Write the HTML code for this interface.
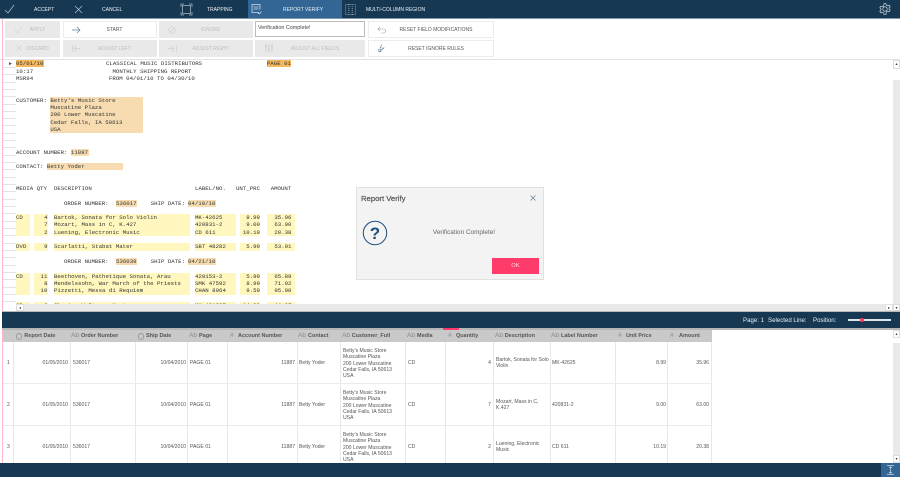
<!DOCTYPE html>
<html><head><meta charset="utf-8">
<style>
html,body{margin:0;padding:0;background:#fff}
#p{position:relative;width:900px;height:477px;overflow:hidden;background:#fff;font-family:"Liberation Sans",sans-serif;color:#444}
.a{position:absolute}
.t{position:absolute;white-space:nowrap;line-height:10px;height:10px}
.tb{font-size:5px;color:#eef3f7;top:5px}
.b{position:absolute;box-sizing:border-box;font-size:5px;text-align:center;white-space:nowrap;height:17px}
.d{background:#e9e9e9;color:#bdbdbd;line-height:19px}
.w{background:#fff;border:1px solid #ececec;color:#555;line-height:17px}
.m{position:absolute;left:16px;width:300px;font:5.72px/7px "Liberation Mono",monospace;color:#333;white-space:pre;height:7px}
.m span{position:absolute;top:0}
.q{right:268.500px}.ds{left:38px}.l{left:179px}.u{right:56px}.am{right:24.500px}
.h{position:absolute}
.or{background:#f4b85e}.pe{background:#f6dcb0}.ye{background:#fff7bd}
.gl{position:absolute;left:3px;width:13px;height:1px;background:#e4e4e4}
.hd{position:absolute;top:330px;height:12px;font-size:5.5px;font-weight:bold;line-height:13px;color:#555;white-space:nowrap}
.ic{position:absolute;top:330px;height:12px;font-size:6.500px;line-height:11px;color:#888;white-space:nowrap}
.ck{position:absolute;top:333px;width:4.800px;height:4.800px;border:.5px solid #999;border-radius:50%}
.c{position:absolute;font-size:5.1px;line-height:6.3px;color:#555;white-space:nowrap}
.r{text-align:right}
.v{position:absolute;top:342px;height:121px;width:1px;background:#e8e8e8}
svg{position:absolute;overflow:visible}
</style></head><body>
<div id="p">
<!-- top bar -->
<div class="a" style="left:0;top:0;width:900px;height:18px;background:#163853"></div>
<div class="a" style="left:248px;top:0;width:94px;height:18px;background:#336595"></div>
<div class="a" style="left:0;top:18px;width:900px;height:1px;background:#7f98aa"></div>
<svg style="left:4px;top:4px" width="11" height="10" fill="none" stroke="#b9c7d2" stroke-width=".7"><path d="M1 6l3 3 6-8"/></svg>
<svg style="left:74px;top:5px" width="9" height="9" fill="none" stroke="#b9c7d2" stroke-width=".7"><path d="M1 1l7 7M8 1l-7 7"/></svg>
<svg style="left:181px;top:4px" width="11" height="11" fill="none" stroke="#9fb1bf" stroke-width=".8"><rect x="1.500" y="1.500" width="8" height="8"/><path d="M0 3V0h3M8 0h3v3M11 8v3H8M3 11H0V8"/></svg>
<svg style="left:251px;top:4px" width="11" height="11" fill="none" stroke="#cddbe6" stroke-width=".8"><path d="M8 8.500H1V.5h8v5M2.500 3h5M2.500 5h5M7 9l1.300 1L10.500 7.500"/></svg>
<svg style="left:345px;top:4px" width="11" height="11" fill="none" stroke="#9fb1bf" stroke-width=".8" stroke-dasharray="1 1"><rect x=".5" y=".5" width="10" height="10"/><path d="M3.800 0v11M7.200 0v11"/></svg>
<svg style="left:879px;top:3px" width="12" height="12" viewBox="0 0 12 12" fill="none" stroke="#b9c7d2" stroke-width=".8"><circle cx="6" cy="6" r="2.200"/><path d="M5 .7h2l.4 1.500 1.300.6 1.400-.7 1.100 1.700-1.100 1 0 1.400 1.100 1-1.100 1.700-1.400-.7-1.300.7L7 11.300H5l-.4-1.500-1.300-.6-1.400.7L.8 8.200l1.100-1V5.800l-1.100-1 1.100-1.700 1.400.7 1.300-.6z"/></svg>
<div class="t tb" style="left:34px">ACCEPT</div>
<div class="t tb" style="left:102px">CANCEL</div>
<div class="t tb" style="left:207px">TRAPPING</div>
<div class="t tb" style="left:283px">REPORT VERIFY</div>
<div class="t tb" style="left:366px">MULTI-COLUMN REGION</div>
<!-- toolbar -->
<div class="b d" style="left:5px;top:21px;width:55px;padding-left:10px">APPLY</div>
<div class="b d" style="left:5px;top:40px;width:55px;padding-left:10px;line-height:18px">DISCARD</div>
<div class="b w" style="left:63px;top:21px;width:94px;padding-left:9px">START</div>
<div class="b d" style="left:63px;top:40px;width:94px;padding-left:9px;line-height:18px">ADJUST LEFT</div>
<div class="b d" style="left:159px;top:21px;width:94px;padding-left:9px">IGNORE</div>
<div class="b d" style="left:159px;top:40px;width:94px;padding-left:9px;line-height:18px">ADJUST RIGHT</div>
<div class="a" style="left:255px;top:21px;width:110px;height:16px;box-sizing:border-box;border:1px solid #bbb;background:#fff;font-size:5.4px;line-height:12px;padding-left:2px;color:#444;white-space:nowrap">Verification Complete!</div>
<div class="b d" style="left:255px;top:40px;width:110px;padding-left:10px;line-height:18px">ADJUST ALL FIELDS</div>
<div class="b w" style="left:368px;top:21px;width:126px;padding-left:10px">RESET FIELD MODIFICATIONS</div>
<div class="b w" style="left:368px;top:40px;width:126px;padding-left:10px;line-height:16px">RESET IGNORE RULES</div>
<svg style="left:14px;top:26px" width="9" height="8" fill="none" stroke="#d8d8d8" stroke-width=".7"><path d="M1 4l2.500 3L8 1"/></svg>
<svg style="left:15px;top:44px" width="8" height="8" fill="none" stroke="#d8d8d8" stroke-width=".7"><path d="M1 1l6 6M7 1l-6 6"/></svg>
<svg style="left:72px;top:26px" width="9" height="8" fill="none" stroke="#667f94" stroke-width=".7"><path d="M0 4h8M5 1l3 3-3 3"/></svg>
<svg style="left:72px;top:45px" width="9" height="7" fill="none" stroke="#cfcfcf" stroke-width=".7"><path d="M.5 0v7M8 3.500H2M4.500 1L2 3.500 4.500 6"/></svg>
<svg style="left:168px;top:26px" width="8" height="8" fill="none" stroke="#cfcfcf" stroke-width=".7"><circle cx="4" cy="4" r="3.300"/><path d="M1.800 6.200l4.400-4.400"/></svg>
<svg style="left:168px;top:45px" width="9" height="7" fill="none" stroke="#cfcfcf" stroke-width=".7"><path d="M8.500 0v7M0 3.500h6M3.500 1L6 3.500 3.500 6"/></svg>
<svg style="left:265px;top:44px" width="8" height="8" fill="none" stroke="#c8c8c8" stroke-width=".8"><path d="M1 0v8M4 0v8M7 0v8M0 2.500h2M3 5.500h2M6 2.500h2"/></svg>
<svg style="left:377px;top:26px" width="9" height="8" fill="none" stroke="#94a3af" stroke-width=".6"><path d="M1 3h5.500a2 2 0 010 4H4M3 1L1 3l2 2"/></svg>
<svg style="left:378px;top:44px" width="7" height="9" fill="none" stroke="#667f94" stroke-width=".6"><path d="M4 .5L2 4h4L1 8"/><circle cx="1.800" cy="6.500" r="1.300"/></svg>
<div class="a" style="left:0;top:59px;width:900px;height:1px;background:#e2e2e2"></div>
<!-- left pink line -->
<div class="a" style="left:2px;top:19px;width:1px;height:444px;background:#ffb6c6"></div>
<!-- gutter -->
<div class="gl" style="top:67px"></div><div class="gl" style="top:74px"></div><div class="gl" style="top:82px"></div><div class="gl" style="top:89px"></div><div class="gl" style="top:96px"></div><div class="gl" style="top:104px"></div><div class="gl" style="top:111px"></div><div class="gl" style="top:118px"></div><div class="gl" style="top:125px"></div><div class="gl" style="top:133px"></div><div class="gl" style="top:140px"></div><div class="gl" style="top:147px"></div><div class="gl" style="top:155px"></div><div class="gl" style="top:162px"></div><div class="gl" style="top:169px"></div><div class="gl" style="top:177px"></div><div class="gl" style="top:184px"></div><div class="gl" style="top:191px"></div><div class="gl" style="top:199px"></div><div class="gl" style="top:206px"></div><div class="gl" style="top:213px"></div><div class="gl" style="top:221px"></div><div class="gl" style="top:228px"></div><div class="gl" style="top:235px"></div><div class="gl" style="top:243px"></div><div class="gl" style="top:250px"></div><div class="gl" style="top:257px"></div><div class="gl" style="top:265px"></div><div class="gl" style="top:272px"></div><div class="gl" style="top:279px"></div><div class="gl" style="top:287px"></div><div class="gl" style="top:294px"></div><div class="gl" style="top:301px"></div>
<div class="t" style="left:8px;top:59px;font-size:5px;color:#555">►</div>
<!-- highlights -->
<div class="h or" style="left:16px;top:60px;width:28px;height:7px"></div>
<div class="h or" style="left:267px;top:60px;width:24px;height:7px"></div>
<div class="h pe" style="left:50px;top:97px;width:93px;height:36px"></div>
<div class="h pe" style="left:71px;top:149px;width:18px;height:7px"></div>
<div class="h pe" style="left:47px;top:163px;width:76px;height:7px"></div>
<div class="h pe" style="left:116px;top:200px;width:21px;height:7px"></div>
<div class="h pe" style="left:188px;top:200px;width:28px;height:7px"></div>
<div class="h ye" style="left:16px;top:214px;width:14px;height:22px"></div>
<div class="h ye" style="left:34px;top:214px;width:14px;height:22px"></div>
<div class="h ye" style="left:54px;top:214px;width:136px;height:22px"></div>
<div class="h ye" style="left:195px;top:214px;width:41px;height:22px"></div>
<div class="h ye" style="left:240px;top:214px;width:20px;height:22px"></div>
<div class="h ye" style="left:267px;top:214px;width:28px;height:22px"></div>
<div class="h ye" style="left:16px;top:243px;width:14px;height:8px"></div>
<div class="h ye" style="left:34px;top:243px;width:14px;height:8px"></div>
<div class="h ye" style="left:54px;top:243px;width:136px;height:8px"></div>
<div class="h ye" style="left:195px;top:243px;width:41px;height:8px"></div>
<div class="h ye" style="left:240px;top:243px;width:20px;height:8px"></div>
<div class="h ye" style="left:267px;top:243px;width:28px;height:8px"></div>
<div class="h pe" style="left:116px;top:258px;width:21px;height:7px"></div>
<div class="h pe" style="left:188px;top:258px;width:28px;height:7px"></div>
<div class="h ye" style="left:16px;top:273px;width:14px;height:22px"></div>
<div class="h ye" style="left:34px;top:273px;width:14px;height:22px"></div>
<div class="h ye" style="left:54px;top:273px;width:136px;height:22px"></div>
<div class="h ye" style="left:195px;top:273px;width:41px;height:22px"></div>
<div class="h ye" style="left:240px;top:273px;width:20px;height:22px"></div>
<div class="h ye" style="left:267px;top:273px;width:28px;height:22px"></div>
<div class="h ye" style="left:16px;top:302px;width:14px;height:2px"></div>
<div class="h ye" style="left:34px;top:302px;width:14px;height:2px"></div>
<div class="h ye" style="left:54px;top:302px;width:136px;height:2px"></div>
<div class="h ye" style="left:195px;top:302px;width:41px;height:2px"></div>
<div class="h ye" style="left:240px;top:302px;width:20px;height:2px"></div>
<div class="h ye" style="left:267px;top:302px;width:28px;height:2px"></div>
<!-- report text -->
<div class="m" style="top:60px">05/01/10<span style="left:90px">CLASSICAL MUSIC DISTRIBUTORS</span><span style="left:251px">PAGE 01</span></div>
<div class="m" style="top:68px">10:17<span style="left:96.500px">MONTHLY SHIPPING REPORT</span></div>
<div class="m" style="top:75px">MSR94<span style="left:93px">FROM 04/01/10 TO 04/30/10</span></div>
<div class="m" style="top:96.600px">CUSTOMER: Betty's Music Store</div>
<div class="m" style="top:104px">          Muscatine Plaza</div>
<div class="m" style="top:111.300px">          200 Lower Muscatine</div>
<div class="m" style="top:118.600px">          Cedar Falls, IA 50613</div>
<div class="m" style="top:126px">          USA</div>
<div class="m" style="top:148.500px">ACCOUNT NUMBER: 11887</div>
<div class="m" style="top:162.800px">CONTACT: Betty Yoder</div>
<div class="m" style="top:185px">MEDIA QTY<span class="ds">DESCRIPTION</span><span class="l">LABEL/NO.</span><span style="left:220px">UNT_PRC</span><span style="left:254.700px">AMOUNT</span></div>
<div class="m" style="top:199.500px"><span style="left:48px">ORDER NUMBER:</span><span style="left:100px">536017</span><span style="left:134.700px">SHIP DATE:</span><span style="left:172px">04/10/10</span></div>
<div class="m" style="top:214px">CD<span class="q">4</span><span class="ds">Bartok, Sonata for Solo Violin</span><span class="l">MK-42625</span><span class="u">8.99</span><span class="am">35.96</span></div>
<div class="m" style="top:221.300px"><span class="q">7</span><span class="ds">Mozart, Mass in C, K.427</span><span class="l">420831-2</span><span class="u">9.00</span><span class="am">63.00</span></div>
<div class="m" style="top:228.600px"><span class="q">2</span><span class="ds">Luening, Electronic Music</span><span class="l">CD 611</span><span class="u">10.19</span><span class="am">20.38</span></div>
<div class="m" style="top:243.300px">DVD<span class="q">9</span><span class="ds">Scarlatti, Stabat Mater</span><span class="l">SBT 48282</span><span class="u">5.99</span><span class="am">53.91</span></div>
<div class="m" style="top:258px"><span style="left:48px">ORDER NUMBER:</span><span style="left:100px">536039</span><span style="left:134.700px">SHIP DATE:</span><span style="left:172px">04/21/10</span></div>
<div class="m" style="top:272.500px">CD<span class="q">11</span><span class="ds">Beethoven, Pathetique Sonata, Arau</span><span class="l">420153-2</span><span class="u">5.99</span><span class="am">65.89</span></div>
<div class="m" style="top:280px"><span class="q">8</span><span class="ds">Mendelssohn, War March of the Priests</span><span class="l">SMK 47592</span><span class="u">8.99</span><span class="am">71.92</span></div>
<div class="m" style="top:287.300px"><span class="q">10</span><span class="ds">Pizzetti, Messa di Requiem</span><span class="l">CHAN 8964</span><span class="u">9.59</span><span class="am">95.90</span></div>
<div class="m" style="top:301.800px">CD<span class="q">3</span><span class="ds">Chopin, Waltzes, Nocturnes</span><span class="l">MK 421887</span><span class="u">14.99</span><span class="am">44.97</span></div>
<!-- scrollbars -->
<div class="a" style="left:16px;top:304px;width:877px;height:8px;background:#e9e9e9"></div>
<div class="a" style="left:16px;top:304px;width:8px;height:7px;background:#fff;border:1px solid #ddd;box-sizing:border-box;font-size:4px;line-height:5px;text-align:center;color:#333">◂</div>
<div class="a" style="left:885px;top:304px;width:8px;height:7px;background:#fff;border:1px solid #ddd;box-sizing:border-box;font-size:4px;line-height:5px;text-align:center;color:#333">▸</div>
<div class="a" style="left:893px;top:60px;width:7px;height:252px;background:#e9e9e9"></div>
<div class="a" style="left:893px;top:60px;width:7px;height:9px;background:#fff;border:1px solid #ddd;box-sizing:border-box;font-size:4px;line-height:6px;text-align:center;color:#333">▴</div>
<div class="a" style="left:893px;top:69px;width:7px;height:11px;background:#fff"></div>
<div class="a" style="left:893px;top:304px;width:7px;height:7px;background:#fff;border:1px solid #ddd;box-sizing:border-box;font-size:4px;line-height:5px;text-align:center;color:#333">▾</div>
<!-- dark bar -->
<div class="a" style="left:2px;top:311px;width:898px;height:1px;background:#b8b8b8"></div>
<div class="a" style="left:2px;top:312px;width:898px;height:16px;background:#163853"></div>
<div class="a" style="left:2px;top:328px;width:898px;height:2px;background:#b5b5b5"></div>
<div class="t" style="left:743px;top:316px;font-size:6.100px;color:#e8eef3">Page: 1</div>
<div class="t" style="left:768px;top:316px;font-size:6.100px;color:#e8eef3">Selected Line:</div>
<div class="t" style="left:813px;top:316px;font-size:6.100px;color:#e8eef3">Position:</div>
<div class="a" style="left:848px;top:319px;width:43px;height:1.500px;background:#dfe5ea"></div>
<div class="a" style="left:859.500px;top:317.500px;width:4.500px;height:4.500px;border-radius:50%;background:#ff3b6b"></div>
<!-- table header -->
<div class="a" style="left:3px;top:330px;width:709px;height:12px;background:#c9c9c9"></div>
<div class="a" style="left:443px;top:328px;width:16px;height:2px;background:#ff3b6b"></div>
<div class="ck" style="left:15.500px"></div><div class="hd" style="left:24.300px">Report Date</div>
<div class="ic" style="left:71px">Ab</div><div class="hd" style="left:81px">Order Number</div>
<div class="ck" style="left:137.500px"></div><div class="hd" style="left:146px">Ship Date</div>
<div class="ic" style="left:189px">Ab</div><div class="hd" style="left:199px">Page</div>
<div class="ic" style="left:230px">#</div><div class="hd" style="left:238px">Account Number</div>
<div class="ic" style="left:298px">Ab</div><div class="hd" style="left:308px">Contact</div>
<div class="ic" style="left:342px">Ab</div><div class="hd" style="left:351.700px">Customer_Full</div>
<div class="ic" style="left:407px">Ab</div><div class="hd" style="left:417px">Media</div>
<div class="ic" style="left:448px">#</div><div class="hd" style="left:456px">Quantity</div>
<div class="ic" style="left:495px">Ab</div><div class="hd" style="left:504.700px">Description</div>
<div class="ic" style="left:551px">Ab</div><div class="hd" style="left:561px">Label Number</div>
<div class="ic" style="left:618px">#</div><div class="hd" style="left:626px">Unit Price</div>
<div class="ic" style="left:670px">#</div><div class="hd" style="left:679px">Amount</div>
<!-- table grid -->
<div class="v" style="left:13px"></div><div class="v" style="left:70px"></div><div class="v" style="left:135px"></div><div class="v" style="left:187px"></div><div class="v" style="left:227px"></div><div class="v" style="left:297px"></div><div class="v" style="left:340px"></div><div class="v" style="left:405px"></div><div class="v" style="left:445px"></div><div class="v" style="left:493px"></div><div class="v" style="left:550px"></div><div class="v" style="left:615px"></div><div class="v" style="left:667px"></div><div class="v" style="left:711px"></div>
<div class="a" style="left:3px;top:383px;width:709px;height:1px;background:#ebebeb"></div>
<div class="a" style="left:3px;top:425px;width:709px;height:1px;background:#ebebeb"></div>
<!-- rows -->
<div class="c" style="left:7px;top:360px">1</div>
<div class="c" style="left:7px;top:402px">2</div>
<div class="c" style="left:7px;top:444px">3</div>
<div class="c r" style="left:20px;width:48px;top:360px">01/05/2010</div>
<div class="c r" style="left:20px;width:48px;top:402px">01/05/2010</div>
<div class="c r" style="left:20px;width:48px;top:444px">01/05/2010</div>
<div class="c" style="left:73px;top:360px">536017</div>
<div class="c" style="left:73px;top:402px">536017</div>
<div class="c" style="left:73px;top:444px">536017</div>
<div class="c r" style="left:140px;width:46px;top:360px">10/04/2010</div>
<div class="c r" style="left:140px;width:46px;top:402px">10/04/2010</div>
<div class="c r" style="left:140px;width:46px;top:444px">10/04/2010</div>
<div class="c" style="left:190px;top:360px">PAGE 01</div>
<div class="c" style="left:190px;top:402px">PAGE 01</div>
<div class="c" style="left:190px;top:444px">PAGE 01</div>
<div class="c r" style="left:250px;width:45px;top:360px">11887</div>
<div class="c r" style="left:250px;width:45px;top:402px">11887</div>
<div class="c r" style="left:250px;width:45px;top:444px">11887</div>
<div class="c" style="left:299px;top:360px">Betty Yoder</div>
<div class="c" style="left:299px;top:402px">Betty Yoder</div>
<div class="c" style="left:299px;top:444px">Betty Yoder</div>
<div class="c" style="left:343px;top:348px">Betty's Music Store<br>Muscatine Plaza<br>200 Lower Muscatine<br>Cedar Falls, IA 50613<br>USA</div>
<div class="c" style="left:343px;top:390px">Betty's Music Store<br>Muscatine Plaza<br>200 Lower Muscatine<br>Cedar Falls, IA 50613<br>USA</div>
<div class="c" style="left:343px;top:432px">Betty's Music Store<br>Muscatine Plaza<br>200 Lower Muscatine<br>Cedar Falls, IA 50613<br>USA</div>
<div class="c" style="left:408px;top:360px">CD</div>
<div class="c" style="left:408px;top:402px">CD</div>
<div class="c" style="left:408px;top:444px">CD</div>
<div class="c r" style="left:470px;width:21px;top:360px">4</div>
<div class="c r" style="left:470px;width:21px;top:402px">7</div>
<div class="c r" style="left:470px;width:21px;top:444px">2</div>
<div class="c" style="left:496px;top:357px">Bartok, Sonata for Solo<br>Violin</div>
<div class="c" style="left:496px;top:399px">Mozart, Mass in C,<br>K.427</div>
<div class="c" style="left:496px;top:441px">Luening, Electronic<br>Music</div>
<div class="c" style="left:552px;top:360px">MK-42625</div>
<div class="c" style="left:552px;top:402px">420831-2</div>
<div class="c" style="left:552px;top:444px">CD 611</div>
<div class="c r" style="left:630px;width:36px;top:360px">8.99</div>
<div class="c r" style="left:630px;width:36px;top:402px">9.00</div>
<div class="c r" style="left:630px;width:36px;top:444px">10.19</div>
<div class="c r" style="left:680px;width:29px;top:360px">35.96</div>
<div class="c r" style="left:680px;width:29px;top:402px">63.00</div>
<div class="c r" style="left:680px;width:29px;top:444px">20.38</div>
<!-- table scrollbar -->
<div class="a" style="left:893px;top:330px;width:7px;height:133px;background:#e9e9e9"></div>
<div class="a" style="left:893px;top:330px;width:7px;height:8px;background:#fff;border:1px solid #ddd;box-sizing:border-box;font-size:4px;line-height:5px;text-align:center;color:#333">▴</div>
<div class="a" style="left:893px;top:338px;width:7px;height:5px;background:#fff"></div>
<div class="a" style="left:893px;top:455px;width:7px;height:8px;background:#fff;border:1px solid #ddd;box-sizing:border-box;font-size:4px;line-height:5px;text-align:center;color:#333">▾</div>
<!-- bottom bar -->
<div class="a" style="left:0;top:463px;width:900px;height:14px;background:#163853"></div>
<div class="a" style="left:881px;top:463px;width:19px;height:14px;background:#336595"></div>
<svg style="left:886px;top:465px" width="9" height="10" fill="none" stroke="#c6d6e2" stroke-width=".7"><path d="M1 .5h7M1 9.500h7M4.500 1.500v7M3 3l1.500-1.500L6 3M3 7l1.500 1.500L6 7"/></svg>
<!-- dialog -->
<div class="a" style="left:356px;top:187px;width:188px;height:93px;box-sizing:border-box;background:#f3f3f3;border:1px solid #e1e1e1"></div>
<div class="t" style="left:361px;top:194px;font-size:7.700px;color:#555;-webkit-text-stroke:.2px #555">Report Verify</div>
<svg style="left:530px;top:195px" width="6" height="6" fill="none" stroke="#5f7a90" stroke-width=".7"><path d="M.5.500l5 5M5.500.500l-5 5"/></svg>
<svg style="left:362px;top:220px" width="26" height="26" fill="none"><circle cx="13" cy="13" r="11.700" stroke="#1f4e79" stroke-width="1"/><text x="13" y="19" text-anchor="middle" font-family="Liberation Sans" font-weight="bold" font-size="17" fill="#1f4e79" stroke="none">?</text></svg>
<div class="t" style="left:364px;width:200px;text-align:center;top:228px;font-size:6.400px;color:#666">Verification Complete!</div>
<div class="a" style="left:492px;top:258px;width:47px;height:16px;background:#ff3b6b;color:#ffd9e2;font-size:5.800px;line-height:17px;text-align:center">OK</div>
</div>
</body></html>
